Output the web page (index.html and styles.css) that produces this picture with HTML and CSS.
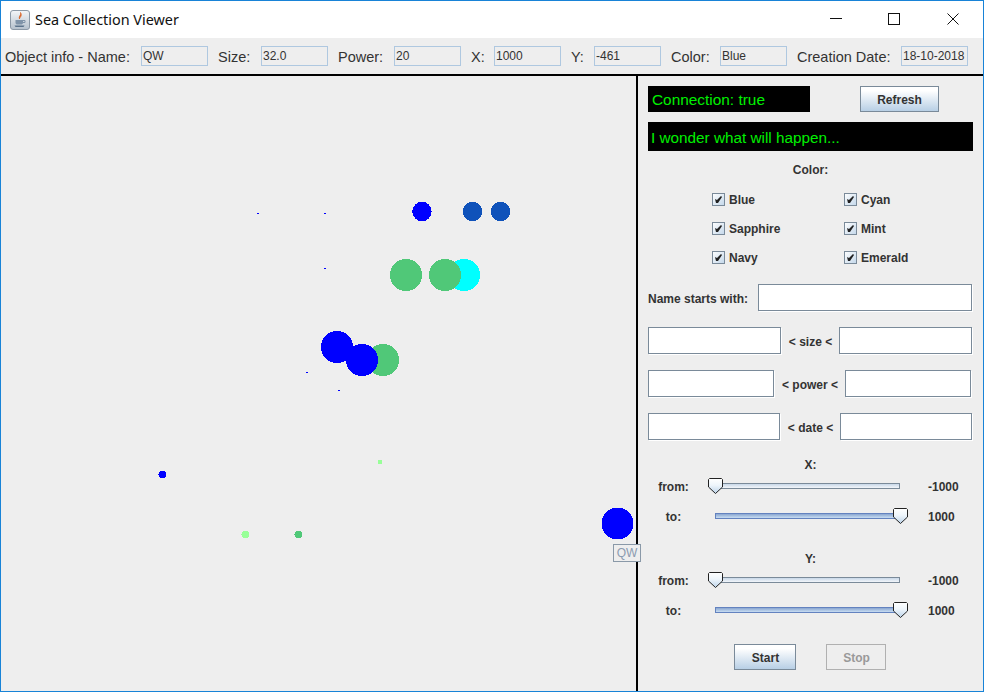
FILE: index.html
```html
<!DOCTYPE html>
<html>

<head>
    <title>Sea Collection Viewer</title>
    <link rel="stylesheet" href="styles.css">
</head>

<body>
    <svg class="defs" width="0" height="0">
        <defs>
            <linearGradient id="thumbFill" x1="0" y1="0" x2="0" y2="1">
                <stop offset="0" stop-color="#ffffff" />
                <stop offset="0.45" stop-color="#eef5fb" />
                <stop offset="1" stop-color="#bcd3e9" />
            </linearGradient>
            <linearGradient id="checkFill" x1="0" y1="0" x2="1" y2="1">
                <stop offset="0" stop-color="#ffffff" />
                <stop offset="1" stop-color="#c3d7ea" />
            </linearGradient>
            <symbol id="checkIcon" viewBox="0 0 13 13">
                <rect x="0.5" y="0.5" width="12" height="12" fill="url(#checkFill)" stroke="#7a8a99" />
                <path d="M3 6 L5 7 L9 3 L10 4 L6 10 L4 10 Z" fill="#222222" />
            </symbol>
            <symbol id="thumbIcon" viewBox="0 0 15 16">
                <path d="M1.5 0.5 H13.5 L14.5 1.5 V9 L7.5 15.5 L0.5 9 V1.5 Z" fill="url(#thumbFill)" stroke="#222222" />
            </symbol>
        </defs>
    </svg>

    <div class="window">
        <div class="titlebar">
            <svg class="app-icon" width="20" height="20" viewBox="0 0 20 20">
                <defs>
                    <linearGradient id="iconBg" x1="0" y1="0" x2="0" y2="1">
                        <stop offset="0" stop-color="#f4f6f8" />
                        <stop offset="1" stop-color="#b4c0cc" />
                    </linearGradient>
                </defs>
                <rect x="0.5" y="0.5" width="19" height="19" rx="2.5" fill="url(#iconBg)" stroke="#8c99a6" />
                <path d="M10.5 2.5 C12 5 8 6 9.5 9 C9.5 7 12.5 6.5 10.5 2.5 Z" fill="#d9662a" stroke="#d9662a" stroke-width="0.8" />
                <path d="M5.5 10 H13 V12.5 C13 14 12 14.5 11 14.5 H7.5 C6.5 14.5 5.5 14 5.5 12.5 Z" fill="#7f93a8" />
                <path d="M13 10.5 H15 V12.5 H13" fill="none" stroke="#7f93a8" />
                <path d="M4.5 15.5 H14.5 L13.5 17 H5.5 Z" fill="#5b738c" />
            </svg>
            <span class="title-text">Sea Collection Viewer</span>
            <div class="window-buttons">
                <svg class="min-btn" width="12" height="13" viewBox="0 0 12 13"><path d="M0 5.5 H12" stroke="#111111" /></svg>
                <svg width="12" height="13" viewBox="0 0 12 13"><rect x="0.5" y="0.5" width="11" height="11" fill="none" stroke="#111111" /></svg>
                <svg width="12" height="13" viewBox="0 0 12 13"><path d="M0.5 0.5 L11.5 11.5 M11.5 0.5 L0.5 11.5" stroke="#111111" /></svg>
            </div>
        </div>

        <div class="infobar">
            <span class="info-label">Object info - Name:</span>
            <span class="info-field">QW</span>
            <span class="info-label">Size:</span>
            <span class="info-field">32.0</span>
            <span class="info-label">Power:</span>
            <span class="info-field">20</span>
            <span class="info-label">X:</span>
            <span class="info-field">1000</span>
            <span class="info-label">Y:</span>
            <span class="info-field">-461</span>
            <span class="info-label">Color:</span>
            <span class="info-field">Blue</span>
            <span class="info-label">Creation Date:</span>
            <span class="info-field">18-10-2018</span>
        </div>

        <div class="main">
            <div class="canvas">
                <svg class="sea" width="635" height="615" viewBox="1 76 635 615" shape-rendering="crispEdges">
                    <rect x="257" y="213" width="2" height="1" fill="#0000ff" />
                    <rect x="324" y="213" width="2" height="1" fill="#0000ff" />
                    <rect x="324" y="268" width="2" height="1" fill="#0000ff" />
                    <rect x="306" y="372" width="2" height="1" fill="#0000ff" />
                    <rect x="338" y="390" width="2" height="1" fill="#0000ff" />
                    <circle cx="422" cy="211.5" r="9.7" fill="#0000ff" />
                    <circle cx="472.5" cy="211.5" r="9.7" fill="#0f52ba" />
                    <circle cx="500.5" cy="211.5" r="9.7" fill="#0f52ba" />
                    <circle cx="464" cy="275" r="16" fill="#00ffff" />
                    <circle cx="406" cy="275" r="16" fill="#50c878" />
                    <circle cx="445" cy="275" r="16" fill="#50c878" />
                    <circle cx="383" cy="360" r="16" fill="#50c878" />
                    <circle cx="337" cy="347" r="16" fill="#0000ff" />
                    <circle cx="362" cy="360" r="16" fill="#0000ff" />
                    <path d="M159 472 h1 v-1 h5 v1 h1 v2 v3 h-1 v1 h-5 v-1 h-1 v-2 h-1 v-1 h1 z" fill="#0000ff" />
                    <rect x="378" y="460" width="4" height="4" fill="#98ff98" />
                    <path d="M242 532 h1 v-1 h5 v1 h1 v5 h-1 v1 h-5 v-1 h-1 v-2 h-1 v-1 h1 z" fill="#98ff98" />
                    <path d="M295 532 h1 v-1 h5 v1 h1 v5 h-1 v1 h-5 v-1 h-1 v-2 h-1 v-1 h1 z" fill="#50c878" />
                    <circle cx="617.5" cy="523.5" r="16" fill="#0000ff" />
                </svg>
                <div class="tooltip">QW</div>
            </div>

            <div class="side">
                <div class="top-row">
                    <div class="status">Connection: true</div>
                    <button class="btn refresh">Refresh</button>
                </div>
                <div class="message">I wonder what will happen...</div>

                <div class="color-title">Color:</div>
                <div class="checks">
                    <label class="check"><svg width="13" height="13"><use href="#checkIcon" /></svg>Blue</label>
                    <label class="check"><svg width="13" height="13"><use href="#checkIcon" /></svg>Cyan</label>
                    <label class="check"><svg width="13" height="13"><use href="#checkIcon" /></svg>Sapphire</label>
                    <label class="check"><svg width="13" height="13"><use href="#checkIcon" /></svg>Mint</label>
                    <label class="check"><svg width="13" height="13"><use href="#checkIcon" /></svg>Navy</label>
                    <label class="check"><svg width="13" height="13"><use href="#checkIcon" /></svg>Emerald</label>
                </div>

                <div class="filter name-row">
                    <span>Name starts with:</span>
                    <input type="text" class="field field-grow">
                </div>
                <div class="filter">
                    <input type="text" class="field size-field">
                    <span>&lt; size &lt;</span>
                    <input type="text" class="field size-field">
                </div>
                <div class="filter power-row">
                    <input type="text" class="field power-field">
                    <span>&lt; power &lt;</span>
                    <input type="text" class="field power-field">
                </div>
                <div class="filter">
                    <input type="text" class="field date-field">
                    <span>&lt; date &lt;</span>
                    <input type="text" class="field date-field">
                </div>

                <div class="axis-title x-title">X:</div>
                <div class="slider-row">
                    <span class="slider-label">from:</span>
                    <div class="track"><svg class="thumb thumb-left" width="15" height="16"><use href="#thumbIcon" /></svg></div>
                    <span class="slider-value">-1000</span>
                </div>
                <div class="slider-row to-row">
                    <span class="slider-label">to:</span>
                    <div class="track track-full"><svg class="thumb thumb-right" width="15" height="16"><use href="#thumbIcon" /></svg></div>
                    <span class="slider-value">1000</span>
                </div>

                <div class="axis-title y-title">Y:</div>
                <div class="slider-row">
                    <span class="slider-label">from:</span>
                    <div class="track"><svg class="thumb thumb-left" width="15" height="16"><use href="#thumbIcon" /></svg></div>
                    <span class="slider-value">-1000</span>
                </div>
                <div class="slider-row to-row">
                    <span class="slider-label">to:</span>
                    <div class="track track-full"><svg class="thumb thumb-right" width="15" height="16"><use href="#thumbIcon" /></svg></div>
                    <span class="slider-value">1000</span>
                </div>

                <div class="bottom-row">
                    <button class="btn start">Start</button>
                    <button class="btn stop" disabled>Stop</button>
                </div>
            </div>
        </div>
    </div>
</body>

</html>
```

FILE: styles.css
```css
html,
body {
    margin: 0;
    padding: 0;
}

body {
    width: 984px;
    height: 692px;
    overflow: hidden;
    font-family: "Liberation Sans", Arial, sans-serif;
    color: #333333;
}

.defs {
    display: block;
    height: 0;
}

.window {
    box-sizing: border-box;
    width: 984px;
    height: 692px;
    border: 1px solid #1883d7;
    background-color: #eeeeee;
    display: flex;
    flex-direction: column;
}

.titlebar {
    height: 37px;
    background-color: #ffffff;
    display: flex;
    align-items: center;
    padding-left: 9px;
    flex-shrink: 0;
}

.title-text {
    margin-left: 5px;
    font-family: "Noto Sans", sans-serif;
    font-size: 14.4px;
    color: #111111;
}

.window-buttons {
    margin-left: auto;
    display: flex;
    gap: 47px;
    padding-right: 24px;
}

.min-btn {
    margin-right: -1px;
}

.infobar {
    height: 36px;
    display: grid;
    grid-template-columns: 126px 67px 33px 67px 46px 67px 13px 67px 13px 67px 39px 67px 94px 67px;
    column-gap: 10px;
    align-items: center;
    padding-left: 4px;
    font-size: 14.5px;
    flex-shrink: 0;
}

.info-label {
    padding-top: 2px;
    white-space: nowrap;
}

.info-field {
    box-sizing: border-box;
    height: 20px;
    line-height: 18px;
    border: 1px solid #afc8e0;
    padding-left: 1px;
    font-size: 12px;
    white-space: nowrap;
}

.main {
    flex: 1;
    display: flex;
    border-top: 2px solid #000000;
    min-height: 0;
}

.canvas {
    width: 635px;
    position: relative;
    flex-shrink: 0;
}

.sea {
    display: block;
}

.tooltip {
    position: absolute;
    left: 612px;
    top: 468px;
    z-index: 2;
    box-sizing: border-box;
    width: 28px;
    height: 18px;
    border: 1px solid #8a99a8;
    background-color: #eeeeee;
    color: #8b9bb0;
    font-size: 12px;
    line-height: 16px;
    text-align: center;
}

.side {
    flex: 1;
    border-left: 2px solid #000000;
    padding: 10px 0 0 10px;
    font-size: 12px;
    font-weight: bold;
}

.top-row {
    display: flex;
    align-items: stretch;
    height: 26px;
}

.status {
    width: 158px;
    padding-left: 4px;
    background-color: #000000;
    color: #00f000;
    font-size: 15.4px;
    font-weight: normal;
    line-height: 28px;
}

.btn {
    box-sizing: border-box;
    height: 26px;
    padding: 1px 0 0;
    border: 1px solid #7a8a99;
    background: linear-gradient(#ffffff, #ffffff 15%, #b8cfe5);
    font-family: "Liberation Sans", Arial, sans-serif;
    font-size: 12px;
    font-weight: bold;
    color: #333333;
}

.refresh {
    width: 79px;
    margin-left: 50px;
}

.message {
    margin-top: 10px;
    width: 322px;
    height: 29px;
    padding-left: 3px;
    background-color: #000000;
    color: #00f000;
    font-size: 15.3px;
    font-weight: normal;
    line-height: 31px;
}

.color-title {
    margin-top: 9px;
    width: 325px;
    height: 20px;
    line-height: 20px;
    text-align: center;
}

.checks {
    margin-top: 5px;
    margin-left: 64px;
    display: grid;
    grid-template-columns: 132px 100px;
    grid-auto-rows: 29px;
}

.check {
    display: flex;
    align-items: center;
    gap: 4px;
}

.filter {
    margin-top: 16px;
    width: 324px;
    height: 27px;
    display: flex;
    align-items: center;
    justify-content: space-between;
}

.filter span {
    padding: 2px 0 0 1px;
}

.name-row {
    margin-top: 12px;
}

.name-row span {
    padding-left: 0;
}

.power-row {
    width: 323px;
}

.field {
    box-sizing: border-box;
    height: 27px;
    margin: 0;
    padding: 0 2px;
    border: 1px solid #7a8a99;
    background-color: #ffffff;
    box-shadow: 1px 1px 0 #ffffff;
    border-radius: 0;
}

.field-grow {
    width: 214px;
}

.size-field {
    width: 133px;
}

.power-field {
    width: 126px;
}

.date-field {
    width: 132px;
}

.axis-title {
    width: 325px;
    height: 16px;
    line-height: 16px;
    text-align: center;
}

.x-title {
    margin-top: 17px;
}

.y-title {
    margin-top: 22px;
}

.slider-row {
    display: grid;
    grid-template-columns: 50px 185px auto;
    column-gap: 17px;
    align-items: center;
    height: 26px;
}

.to-row {
    margin-top: 4px;
}

.slider-value {
    margin-left: 11px;
    padding-top: 2px;
}

.slider-label {
    padding: 2px 0 0 1px;
    text-align: center;
}

.track {
    position: relative;
    box-sizing: border-box;
    height: 6px;
    border: 1px solid #7a8a99;
    background: linear-gradient(#c8d8e8, #f2f6fa);
}

.track-full {
    border-color: #6382bf;
    background: linear-gradient(#8aa6d0, #c8ddf2);
}

.thumb {
    position: absolute;
    top: -6px;
}

.thumb-left {
    left: -8px;
}

.thumb-right {
    right: -9px;
}

.bottom-row {
    margin-top: 21px;
    margin-left: 86px;
    display: flex;
    gap: 30px;
}

.start {
    width: 62px;
    padding-left: 1px;
}

.stop {
    width: 60px;
    padding-left: 1px;
    border-color: #b0b0b0;
    background: #eeeeee;
    color: #999999;
}
```
